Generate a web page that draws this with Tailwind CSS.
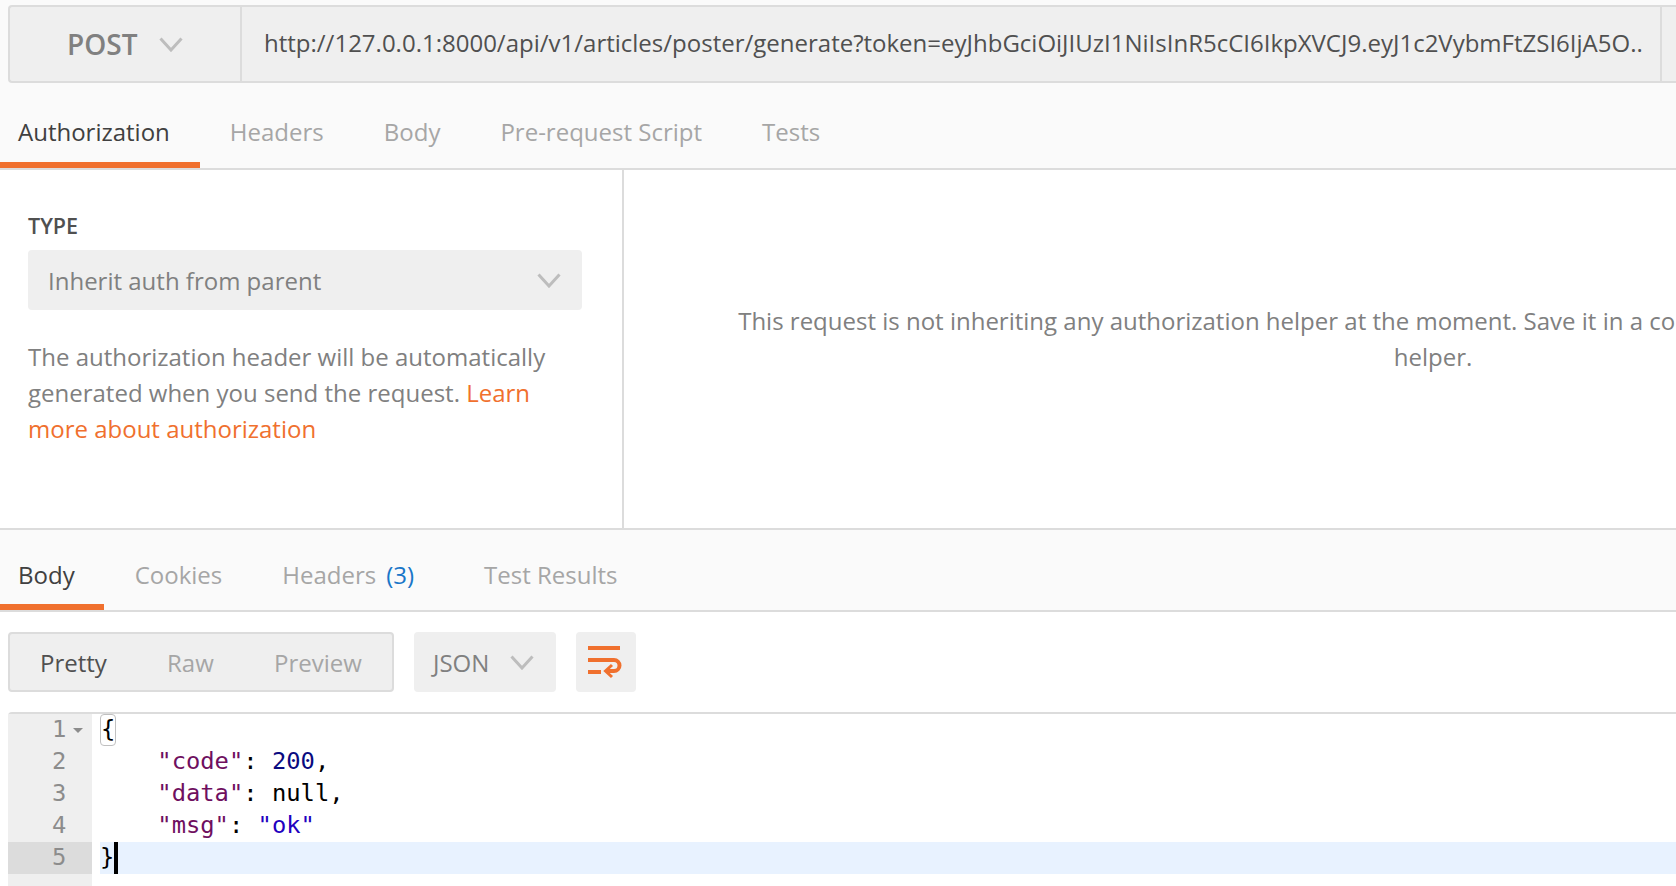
<!DOCTYPE html>
<html lang="en">
<head>
    <meta charset="UTF-8">
    <title>Postman request</title>
    <script src="https://cdn.jsdelivr.net/npm/@tailwindcss/browser@4"></script>
</head>
<body class="h-[886px] overflow-hidden bg-white font-['Open_Sans',sans-serif] text-[24px] text-[#808080]">

    <!-- url bar + request tabs -->
    <section class="bg-[#fafafa] pt-[5px]">
        <div class="ml-2 flex h-[78px] rounded-l border-2 border-r-0 border-[#dcdcdc] bg-[#efefef]">
            <div class="flex w-[232px] shrink-0 items-center border-r-2 border-[#dcdcdc] pl-[57px]">
                <span class="text-[28px] font-semibold">POST</span>
                <svg class="ml-[22px]" width="24" height="15" viewBox="0 0 24 15" fill="none" stroke="#bdbdbd" stroke-width="3"><path d="M1.5 1.5 12 13 22.5 1.5"/></svg>
            </div>
            <div class="flex w-[1420px] shrink-0 items-center overflow-hidden whitespace-nowrap border-r-2 border-[#dcdcdc] pb-[2px] pl-[22px] text-[#505050]">http://127.0.0.1:8000/api/v1/articles/poster/generate?token=eyJhbGciOiJIUzI1NiIsInR5cCI6IkpXVCJ9.eyJ1c2VybmFtZSI6IjA5O..</div>
        </div>
        <div class="flex h-[87px] border-b-2 border-[#dcdcdc]">
            <div class="flex items-center border-b-[6px] border-[#f0702e] pl-[18px] pr-[30px] pt-[19px] text-[#404040]">Authorization</div>
            <div class="flex items-center px-[30px] pt-[13px] text-[#a6a6a6]">Headers</div>
            <div class="flex items-center px-[30px] pt-[13px] text-[#a6a6a6]">Body</div>
            <div class="flex items-center px-[30px] pt-[13px] text-[#a6a6a6]">Pre-request Script</div>
            <div class="flex items-center px-[30px] pt-[13px] text-[#a6a6a6]">Tests</div>
        </div>
    </section>

    <!-- auth pane -->
    <section class="flex h-[360px] border-b-2 border-[#dcdcdc]">
        <div class="w-[624px] shrink-0 border-r-2 border-[#dcdcdc] pl-7 pr-10 pt-[40px]">
            <div class="text-[21.5px] font-semibold leading-[32px] text-[#505050]">TYPE</div>
            <div class="mt-[8px] flex h-[60px] w-[554px] items-center justify-between rounded bg-[#efefef] pl-5 pr-[21px]">
                <span class="pt-[2px]">Inherit auth from parent</span>
                <svg width="24" height="15" viewBox="0 0 24 15" fill="none" stroke="#bdbdbd" stroke-width="3"><path d="M1.5 1.5 12 13 22.5 1.5"/></svg>
            </div>
            <p class="mt-[29px] w-[560px] leading-[36px]">The authorization header will be automatically generated when you send the request. <span class="text-[#f0702e]">Learn more about authorization</span></p>
        </div>
        <div class="w-[1618px] shrink-0 pt-[133px] text-center leading-[36px]">This request is not inheriting any authorization helper at the moment. Save it in a collection to use the parent's authorization<br>helper.</div>
    </section>

    <!-- response tabs -->
    <section class="flex h-[82px] border-b-2 border-[#dcdcdc] bg-[#fafafa]">
        <div class="flex items-center border-b-[6px] border-[#f0702e] pl-[18px] pr-[29px] pt-[15px] text-[#404040]">Body</div>
        <div class="flex items-center pl-[31px] pr-[30px] pt-[9px] text-[#a6a6a6]">Cookies</div>
        <div class="flex items-center px-[30px] pt-[9px] text-[#a6a6a6]">Headers<span class="ml-[10px] text-[#1976c8]">(3)</span></div>
        <div class="flex items-center pl-[40px] pt-[9px] text-[#a6a6a6]">Test Results</div>
    </section>

    <!-- view controls -->
    <div class="ml-2 mt-5 flex h-[60px] gap-5">
        <div class="flex w-[386px] items-center rounded border-2 border-[#dcdcdc] bg-[#efefef] pl-[30px] pt-[1px] text-[#a6a6a6]">
            <span class="w-[127px] text-[#505050]">Pretty</span>
            <span class="w-[107px]">Raw</span>
            <span>Preview</span>
        </div>
        <div class="flex w-[142px] items-center rounded bg-[#efefef] pl-[19px]">
            <span class="pt-[2px]">JSON</span>
            <svg class="ml-[21px]" width="24" height="15" viewBox="0 0 24 15" fill="none" stroke="#bdbdbd" stroke-width="3"><path d="M1.5 1.5 12 13 22.5 1.5"/></svg>
        </div>
        <div class="flex w-[60px] items-start rounded bg-[#efefef] pl-[12px] pt-[14px]">
            <svg width="34" height="34" viewBox="0 0 34 34" fill="none" stroke="#f0702e" stroke-width="4"><path d="M0 2H32"/><path d="M0 14H26a5.500 5.500 0 0 1 0 11H19"/><path d="M0 26H13"/><path d="M24 19l-6.500 6 6.500 6" stroke-width="3"/></svg>
        </div>
    </div>

    <!-- editor -->
    <div class="ml-2 mt-5 flex h-[175px] rounded-tl border-t-2 border-[#dcdcdc] font-['DejaVu_Sans_Mono',monospace] text-[23.8px] leading-[30px] text-black">
        <div class="w-[84px] shrink-0 bg-[#efefef] text-[#8c8c8c]">
            <div class="relative h-[32px] pl-[44px]">1<span class="absolute left-[65px] top-[14px] h-0 w-0 border-x-[5px] border-t-[5px] border-x-transparent border-t-[#8c8c8c]"></span></div>
            <div class="h-[32px] pl-[44px]">2</div>
            <div class="h-[32px] pl-[44px]">3</div>
            <div class="h-[32px] pl-[44px]">4</div>
            <div class="h-[32px] bg-[#dcdcdc] pl-[44px]">5</div>
        </div>
        <div class="grow pl-2">
            <div class="h-[32px]"><span class="inline-block h-[32px] rounded border border-[#c0c0c0] leading-[28px]">{</span></div>
            <div class="h-[32px] whitespace-pre">    <span class="text-[#6f0f5f]">"code"</span>: <span class="text-[#0a0a80]">200</span>,</div>
            <div class="h-[32px] whitespace-pre">    <span class="text-[#6f0f5f]">"data"</span>: null,</div>
            <div class="h-[32px] whitespace-pre">    <span class="text-[#6f0f5f]">"msg"</span>: <span class="text-[#2200c0]">"ok"</span></div>
            <div class="flex h-[32px] bg-[#e8f2ff]">}<span class="h-[32px] w-1 bg-black"></span></div>
        </div>
    </div>
</body>
</html>
